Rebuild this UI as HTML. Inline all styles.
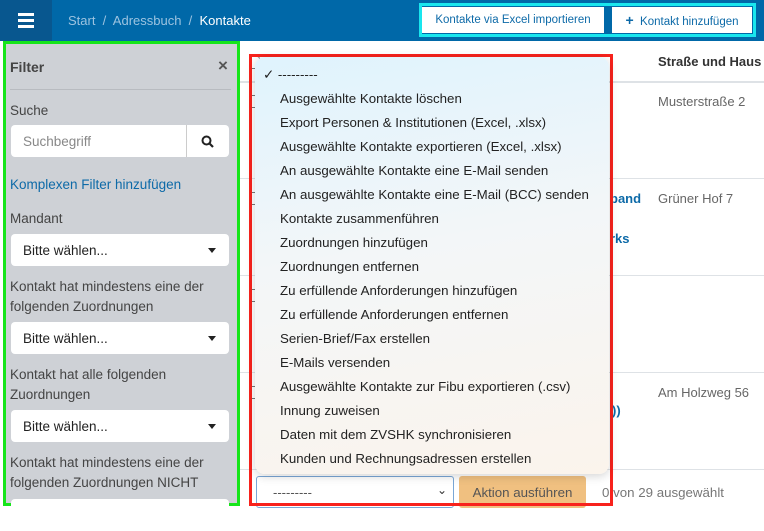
<!DOCTYPE html>
<html><head><meta charset="utf-8"><style>
*{box-sizing:border-box;margin:0;padding:0}
body{width:764px;height:506px;overflow:hidden;font-family:"Liberation Sans",sans-serif;background:#fff;position:relative;color:#333}
.nav{position:absolute;left:0;top:0;width:764px;height:41px;background:#0068a8}
.ham{position:absolute;left:0;top:0;width:52px;height:41px;background:#08578f}
.ham i{position:absolute;left:18px;width:16px;height:3px;background:#fff}
.bc{position:absolute;left:68px;top:13px;font-size:13px;color:#9cc3e0}
.bc b{font-weight:normal;color:#fff}
.hb{position:absolute;left:419px;top:3px;width:337px;height:34px;border:3px solid #19e6ee;background:#0068a8}
.btn{position:absolute;top:1px;height:26px;background:#fff;color:#0d6aa8;font-size:11.5px;line-height:26px;text-align:center}
.side{position:absolute;left:3px;top:41px;width:237px;height:465px;background:#ced1d6;border:3px solid #16e51a}
.s{position:absolute;left:4px;font-size:13.5px;color:#444}
.inp{position:absolute;left:5px;width:218px;height:32px;background:#fff;border-radius:4px}
.sel span{position:absolute;left:12px;top:9px;font-size:13.5px;color:#222}
.sel i{position:absolute;right:13px;top:14px;border-left:4px solid transparent;border-right:4px solid transparent;border-top:5px solid #222}
.hr{position:absolute;left:240px;right:0;height:1px;background:#dee2e6}
.red{position:absolute;left:249px;top:54px;width:364px;height:452px;border:3px solid #f8221c}
.menu{position:absolute;left:255px;top:57px;width:354px;height:417px;border-radius:10px;background:linear-gradient(170deg,#dff3fd 0%,#f3f6f8 45%,#fbf4ec 100%);box-shadow:0 2px 10px rgba(0,0,0,.18)}
.menu div{position:absolute;left:25px;font-size:13.3px;color:#222;white-space:nowrap}
.cb{position:absolute;left:249px;width:11px;height:13px;border:1px solid #777;border-radius:3px}
</style></head><body>
<div class="nav"><div class="ham"><i style="top:13px"></i><i style="top:19px"></i><i style="top:25px"></i></div>
<div class="bc">Start &nbsp;/&nbsp; Adressbuch &nbsp;/&nbsp; <b>Kontakte</b></div>
<div class="hb"><div class="btn" style="left:0;width:182px">Kontakte via Excel importieren</div><div class="btn" style="left:190px;width:140px"><b style="font-size:14px">+</b>&nbsp; Kontakt hinzufügen</div></div></div>

<div class="side">
<div class="s" style="top:15px;font-size:14px;font-weight:bold;color:#444">Filter</div>
<div class="s" style="left:212px;top:12px;font-size:17px;font-weight:bold;color:#555">×</div>
<div style="position:absolute;left:4px;top:45px;width:221px;height:1px;background:#b8bbc0"></div>
<div class="s" style="top:59px">Suche</div>
<div class="inp" style="top:81px"><span style="position:absolute;left:12px;top:9px;font-size:13.5px;color:#888">Suchbegriff</span><div style="position:absolute;left:175px;top:0;width:1px;height:32px;background:#ccc"></div>
<svg style="position:absolute;left:190px;top:10px" width="13" height="13" viewBox="0 0 13 13"><circle cx="5.5" cy="5.5" r="4" fill="none" stroke="#222" stroke-width="2"/><path d="M8.5 8.5l3.5 3.5" stroke="#222" stroke-width="2.2"/></svg></div>
<div class="s" style="top:133px;color:#0d6aa8">Komplexen Filter hinzufügen</div>
<div class="s" style="top:167px">Mandant</div>
<div class="inp sel" style="top:190px"><span>Bitte wählen...</span><i></i></div>
<div class="s" style="top:233px;line-height:20px">Kontakt hat mindestens eine der<br>folgenden Zuordnungen</div>
<div class="inp sel" style="top:278px"><span>Bitte wählen...</span><i></i></div>
<div class="s" style="top:321px;line-height:20px">Kontakt hat alle folgenden<br>Zuordnungen</div>
<div class="inp sel" style="top:366px"><span>Bitte wählen...</span><i></i></div>
<div class="s" style="top:409px;line-height:20px">Kontakt hat mindestens eine der<br>folgenden Zuordnungen NICHT</div>
<div class="inp" style="top:455px"></div>
</div>

<div class="hr" style="top:81px;height:2px"></div>
<div class="hr" style="top:178px"></div>
<div class="hr" style="top:275px"></div>
<div class="hr" style="top:372px"></div>
<div class="hr" style="top:469px"></div>
<div class="cb" style="top:56px"></div><div class="cb" style="top:95px"></div><div class="cb" style="top:192px"></div><div class="cb" style="top:289px"></div><div class="cb" style="top:386px"></div>
<div style="position:absolute;left:658px;top:54px;font-size:13px;font-weight:bold;color:#333;white-space:nowrap">Straße und Haus</div>
<div style="position:absolute;left:658px;top:94px;font-size:13px;color:#666">Musterstraße 2</div>
<div style="position:absolute;left:658px;top:191px;font-size:13px;color:#666">Grüner Hof 7</div>
<div style="position:absolute;left:658px;top:385px;font-size:13px;color:#666">Am Holzweg 56</div>
<div style="position:absolute;left:610px;top:191px;font-size:13px;font-weight:bold;color:#0d6aa8">band</div>
<div style="position:absolute;left:610px;top:231px;font-size:13px;font-weight:bold;color:#0d6aa8">rks</div>
<div style="position:absolute;left:612px;top:403px;font-size:13px;font-weight:bold;color:#0d6aa8">))</div>

<div style="position:absolute;left:256px;top:476px;width:198px;height:32px;border:1px solid #7aa7d6;border-radius:3px;background:#fff;font-size:13px;color:#555;padding:8px 0 0 16px">---------<span style="position:absolute;right:6px;top:6px;font-size:12px;color:#333">⌄</span></div>
<div style="position:absolute;left:459px;top:476px;width:127px;height:32px;background:#f0c080;border-radius:3px;font-size:13.3px;color:#555;text-align:center;padding-top:9px">Aktion ausführen</div>
<div style="position:absolute;left:602px;top:485px;font-size:13.3px;color:#777;white-space:nowrap">0 von 29 ausgewählt</div>

<div class="red"></div>
<div class="menu">
<div style="left:8px;top:10px">✓ ---------</div>
<div style="top:34px">Ausgewählte Kontakte löschen</div>
<div style="top:58px">Export Personen &amp; Institutionen (Excel, .xlsx)</div>
<div style="top:82px">Ausgewählte Kontakte exportieren (Excel, .xlsx)</div>
<div style="top:106px">An ausgewählte Kontakte eine E-Mail senden</div>
<div style="top:130px">An ausgewählte Kontakte eine E-Mail (BCC) senden</div>
<div style="top:154px">Kontakte zusammenführen</div>
<div style="top:178px">Zuordnungen hinzufügen</div>
<div style="top:202px">Zuordnungen entfernen</div>
<div style="top:226px">Zu erfüllende Anforderungen hinzufügen</div>
<div style="top:250px">Zu erfüllende Anforderungen entfernen</div>
<div style="top:274px">Serien-Brief/Fax erstellen</div>
<div style="top:298px">E-Mails versenden</div>
<div style="top:322px">Ausgewählte Kontakte zur Fibu exportieren (.csv)</div>
<div style="top:346px">Innung zuweisen</div>
<div style="top:370px">Daten mit dem ZVSHK synchronisieren</div>
<div style="top:394px">Kunden und Rechnungsadressen erstellen</div>
</div>
</body></html>
